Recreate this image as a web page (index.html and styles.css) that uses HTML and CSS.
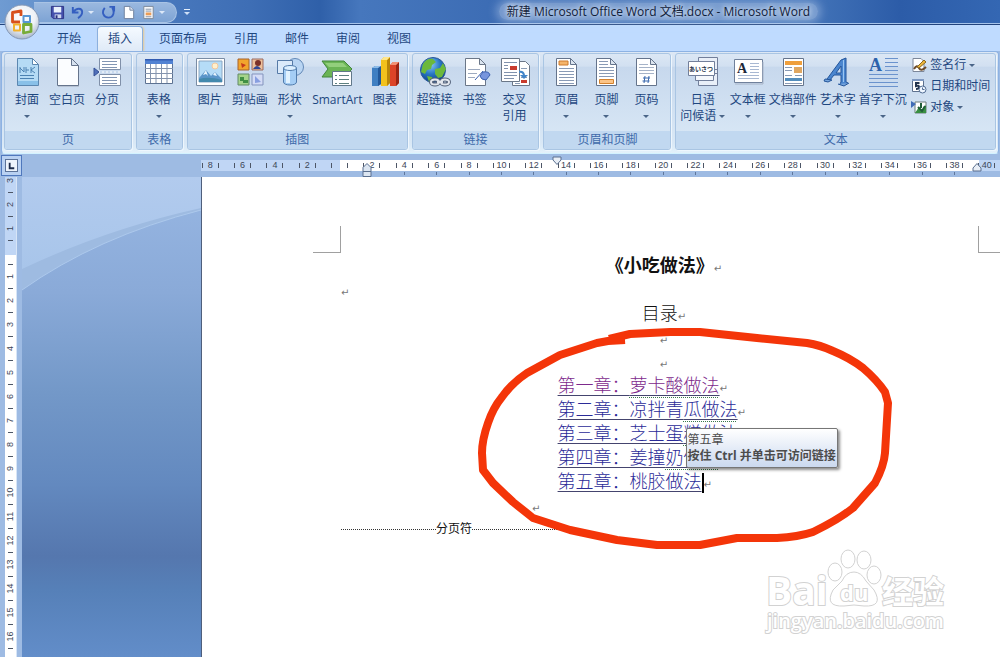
FILE: index.html
```html
<!DOCTYPE html>
<html lang="zh-CN">
  <head>
    <meta charset="UTF-8" />
    <meta name="viewport" content="width=device-width, initial-scale=1.0" />
    <title>新建 Microsoft Office Word 文档.docx - Microsoft Word</title>
    <link rel="stylesheet" href="styles.css">
  </head>

  <body>
    <!-- 标题栏 -->
    <header class="titlebar">
      <button class="office-button" aria-label="Office">
        <svg viewBox="0 0 38 38">
          <defs>
            <radialGradient id="orb" cx="50%" cy="35%" r="65%">
              <stop offset="0" stop-color="#fff" />
              <stop offset=".6" stop-color="#eef1f6" />
              <stop offset="1" stop-color="#a9b6ca" />
            </radialGradient>
          </defs>
          <circle cx="19" cy="19" r="17" fill="url(#orb)" stroke="#8497b5" />
          <g fill="none" stroke-width="2.8" stroke-linejoin="round">
            <path d="M17 19H9.500V9.500L18 8v5" stroke="#d8501c" />
            <path d="M20.500 13h6.500v6h-6.500z" stroke="#5796d4" stroke-width="2" />
            <path d="M11 21.500h6v6h-6z" stroke="#f2b12c" stroke-width="2" />
            <path d="M20.500 21.500h7.500v7l-7.500 1.500z" stroke="#77ac38" />
          </g>
        </svg>
      </button>
      <div class="quick-access">
        <button aria-label="保存">
          <svg viewBox="0 0 16 16"><path d="M1.500 1.500h13v13h-11l-2-2z" fill="#4450ac" stroke="#2c3283" /><path d="M4 2h8v6H4z" fill="#e9f0fb" /><path d="M5 10h7v4H5z" fill="#cdd5ec" /><path d="M6 11h2v3H6z" fill="#28317e" /></svg>
        </button>
        <button aria-label="撤销">
          <svg viewBox="0 0 16 16"><path d="M3 2v6h6M3.500 7.500C7 2.500 13 3 13 7.500c0 3-2 5-4.500 6.500" fill="none" stroke="#355fc0" stroke-width="2" /></svg>
        </button>
        <span class="caret light"></span>
        <button aria-label="恢复">
          <svg viewBox="0 0 16 16"><path d="M9 2h5v5M4 3C0 8 3 13.500 8 13.500S15 8 12 3" fill="none" stroke="#355fc0" stroke-width="2" /></svg>
        </button>
        <button aria-label="新建">
          <svg viewBox="0 0 16 16"><path d="M3.500 1.500h6l4 4v9h-10z" fill="#fff" stroke="#6e7f9c" /><path d="M9.500 1.500v4h4" fill="#dfe8f4" stroke="#6e7f9c" /></svg>
        </button>
        <button aria-label="页眉">
          <svg viewBox="0 0 16 16"><path d="M3 1.500h10v13H3z" fill="#f6f7f9" stroke="#7b8798" /><path d="M5 4.500h6M5 6.500h6M5 12.500h6" stroke="#8894a8" /><path d="M5 8h6v3H5z" fill="#ea9c56" /></svg>
        </button>
        <span class="caret light"></span>
      </div>
      <button class="qat-more" aria-label="自定义快速访问工具栏"><span class="caret light"></span></button>
      <h1 class="window-title"><span>新建 Microsoft Office Word 文档.docx - Microsoft Word</span></h1>
    </header>

    <!-- 选项卡 -->
    <nav class="tabs">
      <button>开始</button>
      <button class="active">插入</button>
      <button>页面布局</button>
      <button>引用</button>
      <button>邮件</button>
      <button>审阅</button>
      <button>视图</button>
    </nav>

    <!-- 功能区 -->
    <section class="ribbon">
      <div class="group three">
        <div class="tools">
          <button class="tool">
            <svg viewBox="0 0 32 32"><path d="M6.500 2.500h15l6 6v21h-21z" fill="#b5dbf5" stroke="#5c87b0" /><path d="M21.500 2.500v6h6z" fill="#fff" stroke="#5c87b0" /><path d="M9 11v6M9 12l4 4v-5M15 11v6M15 14h3M20 11v6M20 14l4-3M20 14l4 3M9 19.500h14M9 22.500h14" fill="none" stroke="#4c82b2" /><path d="M7 25h20v4H7z" fill="#89c0e8" /></svg>
            <span>封面</span><i class="caret"></i>
          </button>
          <button class="tool">
            <svg viewBox="0 0 32 32"><path d="M6.500 2.500h14l7 7v20h-21z" fill="#fbfdff" stroke="#65748c" /><path d="M20.500 2.500v7h7z" fill="#d7e2ef" stroke="#65748c" /><path d="M7 30.500h21" stroke="#b6c2d3" /></svg>
            <span>空白页</span>
          </button>
          <button class="tool">
            <svg viewBox="0 0 32 32"><path d="M8.500 2.500h21v11h-21zM8.500 18.500h21v11h-21z" fill="#fff" stroke="#8090a9" /><path d="M11 5.500h15M11 8.500h15M11 11.500h15M11 21.500h15M11 24.500h15M11 27.500h15" stroke="#8295b2" /><path d="M7 16h23" stroke="#fff" stroke-dasharray="2" /><path d="M3 12l5 4-5 4z" fill="#4f6fb9" stroke="#355097" /></svg>
            <span>分页</span>
          </button>
        </div>
        <h2>页</h2>
      </div>

      <div class="group one">
        <div class="tools">
          <button class="tool">
            <svg viewBox="0 0 32 32"><path d="M2.500 4.500h27v23h-27z" fill="#fff" stroke="#5d7292" /><path d="M2 3h28v5H2z" fill="#5282d2" /><path d="M2 3h28v1.500H2z" fill="#315bb1" /><path d="M2 12.500h28M2 17.500h28M2 22.500h28M7.500 8v19M13 8v19M18.500 8v19M24 8v19" stroke="#8393ad" /></svg>
            <span>表格</span><i class="caret"></i>
          </button>
        </div>
        <h2>表格</h2>
      </div>

      <div class="group pictures">
        <div class="tools">
          <button class="tool">
            <svg viewBox="0 0 32 32"><path d="M2.500 2.500h28v27h-28z" fill="#fff" stroke="#7a8ca4" /><path d="M5 5h23v21H5z" fill="#b5dcf7" stroke="#8aa6c3" /><circle cx="21" cy="10" r="3" fill="#fff0cd" stroke="#f3c79c" /><path d="M5 22l7-8 5 6 4-4 7 7v3H5z" fill="#5b96ca" /><path d="M12 14l-3 5 3-1 2 2zM21 16l-2 3 4 1z" fill="#e9f5fd" /><path d="M5 23q10-3 23 1v2H5z" fill="#4389ad" /></svg>
            <span>图片</span>
          </button>
          <button class="tool">
            <svg viewBox="0 0 32 32"><path d="M4 3h11v11H4z" fill="#f2a52c" stroke="#a7622c" /><path d="M7 7l5 2-4 3z" fill="#c3391c" /><path d="M18 3h11v11H18z" fill="#edc09a" stroke="#9a6b60" /><circle cx="24" cy="7" r="3" fill="#7b3128" /><path d="M19 13q4-6 8 0z" fill="#314794" /><path d="M4 18h11v11H4z" fill="#a5d48a" stroke="#628969" /><path d="M6 21h4v3h4v3h-5v-2H6z" fill="#409044" /><path d="M18 18h11v11H18z" fill="#d4dcf6" stroke="#8393bd" /><path d="M21 20l6 6-6 1z" fill="#879ee0" /></svg>
            <span>剪贴画</span>
          </button>
          <button class="tool">
            <svg viewBox="0 0 32 32"><circle cx="21" cy="11" r="8.500" fill="#b9d5f3" stroke="#6288b7" /><path d="M3.500 4.500h15v13h-15z" fill="#dbeafa" stroke="#567aa7" /><path d="M9.500 12v14c0 4 13 4 13 0V12" fill="#a4cdf5" stroke="#517cad" /><path d="M12 14v13h4V14z" fill="#e1f2ff" /><ellipse cx="16" cy="12" rx="6.500" ry="2.500" fill="#dcefff" stroke="#517cad" /></svg>
            <span>形状</span><i class="caret"></i>
          </button>
          <button class="tool wide">
            <svg viewBox="0 0 32 32"><path d="M1 5h22l8 8-8 8H1l6-8z" fill="#6ab455" stroke="#42873d" /><path d="M4 7h18l4 4H8z" fill="#92cf7c" /><path d="M11.500 15.500h19v14h-19z" fill="#fff" stroke="#61788a" /><path d="M18 19.500h10M18 23.500h10M18 27.500h10M14 19.500h2M14 23.500h2M14 27.500h2" stroke="#5d8080" /></svg>
            <span>SmartArt</span>
          </button>
          <button class="tool">
            <svg viewBox="0 0 32 32"><path d="M3 12l3-2h6v18l-3 2H3z" fill="#3f7fc2" /><path d="M9 12l3-2v18l-3 2z" fill="#22589a" /><path d="M3 12l3-2h6l-3 2z" fill="#8dbbe7" /><path d="M12 4l3-3h6v26l-3 3h-6z" fill="#f2c21d" /><path d="M18 4l3-3v26l-3 3z" fill="#b98709" /><path d="M12 4l3-3h6l-3 3z" fill="#ffe58b" /><path d="M21 9l3-3h6v21l-3 3h-6z" fill="#dc4428" /><path d="M27 9l3-3v21l-3 3z" fill="#992413" /><path d="M21 9l3-3h6l-3 3z" fill="#f19175" /></svg>
            <span>图表</span>
          </button>
        </div>
        <h2>插图</h2>
      </div>

      <div class="group three">
        <div class="tools">
          <button class="tool">
            <svg viewBox="0 0 32 32"><defs><radialGradient id="sea" cx="40%" cy="28%" r="75%"><stop offset="0" stop-color="#8dcaf6" /><stop offset=".5" stop-color="#2978c4" /><stop offset="1" stop-color="#0b3b88" /></radialGradient></defs><circle cx="14" cy="14" r="12.500" fill="url(#sea)" stroke="#2a5799" /><path d="M4 8q4-6 10-5l3 3-4 3-1 4-4 1-2 4-4-2zM16 13l5-1 3-5 3 6-4 8-4 1-3-4zM8 20l5 1 1 4-4 1z" fill="#6cb83b" /><g fill="none" stroke="#54627a" stroke-width="4"><ellipse cx="16" cy="26" rx="4" ry="2.500" /><ellipse cx="26" cy="26" rx="4" ry="2.500" /></g><g fill="none" stroke="#e2e6ed" stroke-width="2"><ellipse cx="16" cy="26" rx="4" ry="2.500" /><ellipse cx="26" cy="26" rx="4" ry="2.500" /><path d="M18 26h6" /></g></svg>
            <span>超链接</span>
          </button>
          <button class="tool">
            <svg viewBox="0 0 32 32"><path d="M6.500 2.500h14l6 6v21h-20z" fill="#fff" stroke="#6b7788" /><path d="M20.500 2.500v6h6z" fill="#dce5ef" stroke="#6b7788" /><path d="M9 13.500h12M9 17.500h9M9 21.500h7" stroke="#9daac0" /><path d="M16 24l8-9M24 16q6-1 7 3l-4 5q-5 0-6-4z" fill="#7795dd" stroke="#3b60b0" /></svg>
            <span>书签</span>
          </button>
          <button class="tool">
            <svg viewBox="0 0 32 32"><path d="M13.500 5.500h13l4 4v20h-17z" fill="#fff" stroke="#6b7788" /><path d="M22 24h6v3h-6z" fill="#c93b2d" /><path d="M16 27.500h5M22 12.500h6M22 21.500h6" stroke="#8b9cb5" /><path d="M2.500 2.500h18v23h-18z" fill="#fff" stroke="#6b7788" /><path d="M5 6.500h13M5 9.500h4M5 12.500h4M5 16.500h13M5 19.500h13M5 22.500h10" stroke="#8092ad" /><path d="M11 10h7v4h-7z" fill="#c93b2d" /><path d="M20 15q5-1 6 4h3l-4 4-4-4h3q-1-3-4-2z" fill="#4285c9" /></svg>
            <span>交叉<br>引用</span>
          </button>
        </div>
        <h2>链接</h2>
      </div>

      <div class="group three">
        <div class="tools">
          <button class="tool">
            <svg viewBox="0 0 32 32"><path d="M6.500 2.500h14l6 6v21h-20z" fill="#fff" stroke="#65748c" /><path d="M20.500 2.500v6h6z" fill="#dce5ef" stroke="#65748c" /><path d="M9 5h9v4H9z" fill="#f5b56b" stroke="#ce7a2c" /><path d="M9 12.500h15M9 15.500h15M9 18.500h15M9 21.500h15M9 24.500h15M9 27.500h15" stroke="#899ab5" /></svg>
            <span>页眉</span><i class="caret"></i>
          </button>
          <button class="tool">
            <svg viewBox="0 0 32 32"><path d="M6.500 2.500h14l6 6v21h-20z" fill="#fff" stroke="#65748c" /><path d="M20.500 2.500v6h6z" fill="#dce5ef" stroke="#65748c" /><path d="M9 5.500h9M9 8.500h9M9 11.500h15M9 14.500h15M9 17.500h15M9 20.500h15" stroke="#899ab5" /><path d="M9.500 23.500h14v4h-14z" fill="#fbc487" stroke="#d3822e" /></svg>
            <span>页脚</span><i class="caret"></i>
          </button>
          <button class="tool">
            <svg viewBox="0 0 32 32"><path d="M6.500 2.500h14l6 6v21h-20z" fill="#fff" stroke="#65748c" /><path d="M20.500 2.500v6h6z" fill="#dce5ef" stroke="#65748c" /><path d="M9 8.500h9M9 11.500h15M9 14.500h15M9 17.500h15" stroke="#a6b3c8" /><path d="M15 20l-1 7M19 20l-1 7M13 22h7M12.500 25h7" stroke="#3a69ae" /></svg>
            <span>页码</span><i class="caret"></i>
          </button>
        </div>
        <h2>页眉和页脚</h2>
      </div>

      <div class="group text-group">
        <div class="tools">
          <button class="tool mid">
            <svg viewBox="0 0 32 32"><path d="M11.500 1.500h19v16h-19zM11.500 13.500h19v16h-19z" fill="#e9eff8" stroke="#727f9b" /><path d="M8.500 10.500h18v14h-18z" fill="#f5f8fc" stroke="#727f9b" /><path d="M1.500 5.500h26v14h-26z" fill="#fff" stroke="#727f9b" /><text class="kana" x="2" y="15">あいさつ</text></svg>
            <span>日语<br>问候语 <i class="caret inline"></i></span>
          </button>
          <button class="tool mid">
            <svg viewBox="0 0 32 32"><path d="M2.500 3.500h28v23h-28z" fill="#fff" stroke="#6f809b" /><path d="M3 28h28V6" fill="none" stroke="#a8b4c7" /><text class="serif-a" x="5" y="17">A</text><path d="M18 7.500h9M18 10.500h9M18 13.500h9M18 16.500h9M6 19.500h21M6 22.500h21" stroke="#a8b8d2" /></svg>
            <span>文本框</span><i class="caret"></i>
          </button>
          <button class="tool mid">
            <svg viewBox="0 0 32 32"><path d="M6.500 2.500h20v27h-20z" fill="#fff" stroke="#65748c" /><path d="M8 5h17v4H8z" fill="#ef9f3c" /><path d="M8 11.500h7M8 14.500h7M18 19.500h7M8 19.500h7M8 27.500h17" stroke="#899ab5" /><path d="M17 11h8v6h-8z" fill="#e0a761" /><path d="M8 22h17v3H8z" fill="#538dbc" /></svg>
            <span>文档部件</span><i class="caret"></i>
          </button>
          <button class="tool mid">
            <svg viewBox="0 0 32 32"><path d="M5 23L19 4l5-2v24l2 1-5 2-3-1 1-2v-7h-7l-4 5-4 1zM14 17h5v-7z" fill="#4b86cf" stroke="#24559a" fill-rule="evenodd" /><path d="M3 23l7 1-4 2-4-1zM16 28l6 2 5-3" fill="#76a5dd" stroke="#24559a" /><path d="M21.500 4v22" stroke="#9bc6f2" /></svg>
            <span>艺术字</span><i class="caret"></i>
          </button>
          <button class="tool mid">
            <svg viewBox="0 0 32 32"><text class="serif-a drop" x="2" y="15">A</text><path d="M18 2.500h13M18 6.500h13M18 10.500h13M18 14.500h13M2 18.500h29M2 22.500h29M2 26.500h29M2 30.500h29" stroke="#6b93cd" /></svg>
            <span>首字下沉</span><i class="caret"></i>
          </button>
          <div class="small-tools">
            <button>
              <svg viewBox="0 0 16 16"><path d="M2 1.500h8l3 3v10H2z" fill="#fff" stroke="#7c879a" /><path d="M3 12q3-5 5-1t7-1" fill="none" stroke="#6b4b2c" stroke-width="2" /><path d="M6 10l7-7 2 2-7 6z" fill="#edb63d" stroke="#8b6821" /></svg>
              签名行 <i class="caret inline"></i>
            </button>
            <button>
              <svg viewBox="0 0 16 16"><path d="M1.500 1.500h11v12h-11z" fill="#fff" stroke="#5e718e" /><path d="M1 1h12v2H1z" fill="#7f99c2" /><path d="M8.500 5H5v3q3-1 3 1t-3 2" fill="none" stroke="#23344e" stroke-width="2" /><circle cx="11.500" cy="11.500" r="3.500" fill="#edf5ff" stroke="#526c92" /><path d="M11.500 9.500v2h2" fill="none" stroke="#526c92" /></svg>
              日期和时间
            </button>
            <button>
              <svg viewBox="0 0 16 16"><path d="M4 3h11v11H4z" fill="#fff" stroke="#6c7d7c" /><path d="M4 14l4-6 3 3 4-5v8z" fill="#398f42" /><path d="M0 2l5 3-5 4z" fill="#406bb6" /><path d="M10 4v5m-3-1l4 4 3-5" fill="none" stroke="#225e39" stroke-width="2" /></svg>
              对象 <i class="caret inline"></i>
            </button>
          </div>
        </div>
        <h2>文本</h2>
      </div>
    </section>

    <!-- 编辑区 -->
    <main class="workspace">
      <button class="tab-stop" aria-label="制表符"><svg viewBox="0 0 12 12"><path d="M4 3v6h5" fill="none" stroke="#1d2c4b" stroke-width="2" /></svg></button>
      <div class="ruler-top">
        <div class="ruler-track" id="rulerTop"></div>
        <svg class="marker indent-left" viewBox="0 0 10 16"><path d="M1 9.500V5.500l4-4 4 4v4zM1 9.500h8v5H1z" fill="#dce6f2" stroke="#5a6f8f" /></svg>
        <svg class="marker indent-first" viewBox="0 0 10 10"><path d="M1 1h8v3L5 8.500 1 4z" fill="#e8eef6" stroke="#5a6f8f" /></svg>
        <svg class="marker indent-right" viewBox="0 0 10 10"><path d="M1 9V6l4-4.500L9 6v3z" fill="#e8eef6" stroke="#5a6f8f" /></svg>
      </div>
      <div class="ruler-left"><div class="ruler-column" id="rulerLeft"></div></div>
      <div class="canvas">
        <svg viewBox="0 0 180 120" preserveAspectRatio="none">
          <defs>
            <linearGradient id="glow" x1="0" y1="0" x2="0" y2="1">
              <stop offset="0" stop-color="#b2cbee" />
              <stop offset="1" stop-color="#a8c5ea" />
            </linearGradient>
          </defs>
          <path d="M0 0h180v33Q75 60 0 113z" fill="#9ebbe1" />
          <path d="M0 0h180v31Q85 52 0 92z" fill="url(#glow)" />
          <path d="M0 113Q75 60 180 33" fill="none" stroke="#adc9ec" />
        </svg>
      </div>
      <article class="page">
        <div class="crop-marks"><span></span><span></span></div>
        <div class="content">
          <h3>《小吃做法》<i class="mark">↵</i></h3>
          <p><i class="mark">↵</i></p>
          <p class="center">目录<i class="mark">↵</i></p>
          <p class="center"><i class="mark">↵</i></p>
          <p class="center"><i class="mark">↵</i></p>
          <ul class="toc">
            <li><a class="visited" href="#c1">第一章：<span>萝卡酸做法</span></a><i class="mark">↵</i></li>
            <li><a href="#c2">第二章：凉拌青<span>瓜做法</span></a><i class="mark">↵</i></li>
            <li><a href="#c3">第三章：芝士蛋<span>糕做法</span></a><i class="mark">↵</i></li>
            <li><a href="#c4">第四章：姜撞<span>奶做法</span></a><i class="mark">↵</i></li>
            <li>
              <a href="#c5">第五章：桃胶做法</a><b class="cursor"></b><i class="mark">↵</i>
              <div class="tooltip" role="tooltip">第五章<strong>按住 Ctrl 并单击可访问链接</strong></div>
            </li>
          </ul>
          <p class="after-toc"><i class="mark">↵</i></p>
          <div class="page-break">分页符</div>
        </div>
        <!-- 手绘红圈 -->
        <svg class="red-circle" viewBox="202 177 798 480">
          <path d="M625 340L608 341 597 343 560 355 527 373 Q512 383 502 397 Q493 408 488 423 Q482 440 482 453 L483 470 493 483 513 502 533 518 570 530 617 540 657 545H700L737 538H777Q798 537 813 532Q838 520 853 508L875 483Q884 466 885 453L888 403 885 392Q877 380 863 368Q850 358 833 351Q820 345 807 343L757 338 700 332H670L630 334 609 339" />
        </svg>
        <!-- 水印 -->
        <svg class="watermark" viewBox="0 0 190 90">
          <text class="brand" x="4" y="56">Bai</text>
          <g class="paw">
            <ellipse cx="73" cy="23" rx="7" ry="9" />
            <ellipse cx="86" cy="10" rx="7" ry="9" />
            <ellipse cx="102" cy="11" rx="7" ry="9" />
            <ellipse cx="112" cy="26" rx="7" ry="9" />
            <path d="M92 23q7 0 12 9l8 9q10 17-10 16-10-2-20 0-20 1-11-16l9-9q4-9 12-9z" />
          </g>
          <text class="du" x="78" y="52">du</text>
          <text class="exp" x="120" y="54">经验</text>
          <text class="site" x="5" y="79">jingyan.baidu.com</text>
        </svg>
      </article>
    </main>

    <script>
      // 水平标尺：左侧 8~2 为页边距
      const rulerTop = document.getElementById("rulerTop");
      for (let n = -8; n <= 40; n += 2) {
        const cell = document.createElement("div");
        cell.className = "cell";
        if (n < 0) cell.classList.add("margin");
        if (n === 0) cell.classList.add("zero");
        if (n === 40) cell.classList.add("end");
        if (n > 2 && n < 40) cell.classList.add("stop");
        cell.innerHTML = `<span>${n === 0 ? "" : Math.abs(n)}</span>`;
        rulerTop.appendChild(cell);
      }

      // 垂直标尺
      const rulerLeft = document.getElementById("rulerLeft");
      for (let n = -3; n <= 16; n++) {
        const cell = document.createElement("div");
        cell.className = n < 0 ? "cell margin" : n === 0 ? "cell zero" : "cell";
        cell.innerHTML = `<span>${n === 0 ? "" : Math.abs(n)}</span>`;
        rulerLeft.appendChild(cell);
      }
    </script>
  </body>
</html>
```
FILE: styles.css
```css
/* 全局样式 */
* {
  box-sizing: border-box;
}

body {
  margin: 0;
  height: 100vh;
  display: flex;
  flex-direction: column;
  overflow: hidden;
  background: #9ebbe3;
  color: #1e477f;
  font: 12px/16px "Open Sans", "Noto Sans CJK SC", sans-serif;
}

button {
  margin: 0;
  padding: 0;
  border: 0;
  background: none;
  color: inherit;
  font: inherit;
}

h1,
h2,
h3,
p,
ul {
  margin: 0;
  padding: 0;
}

svg {
  display: block;
}

.caret {
  display: block;
  width: 0;
  border: 3px solid transparent;
  border-top-color: #4a6588;
  border-bottom: 0;
}

.caret.inline {
  display: inline-block;
  vertical-align: middle;
}

.caret.light {
  border-top-color: #cfe0f7;
}

/* 标题栏 */
.titlebar {
  position: relative;
  flex: none;
  height: 25px;
  display: flex;
  align-items: center;
  padding-left: 34px;
  background: linear-gradient(90deg, #6f9bd2 0, #4b7bbf 14%, #3e6eb5 25%, #2f60a9 32%, #4677bd 36%, #3c6cb4 50%, #4576ba 80%, #2c5ca8 90%, #3467b3 100%);
  border-bottom: 1px solid #21437d;
  box-shadow: inset 0 -1px #a5c3ea;
}

.office-button {
  position: absolute;
  left: 3px;
  top: 3px;
  width: 38px;
  height: 38px;
  z-index: 2;
}

.quick-access {
  height: 21px;
  display: flex;
  align-items: center;
  gap: 5px;
  padding: 0 9px 0 16px;
  border: 1px solid #a8c3e5;
  border-left: 0;
  border-radius: 0 12px 12px 0;
  background: linear-gradient(#9ab8df, #7da3d4);
}

.quick-access svg {
  width: 15px;
  height: 15px;
}

.quick-access .caret {
  margin: 0 2px 0 -2px;
  border-top-color: #dce8f8;
}

.qat-more {
  padding: 1px 7px;
}

.qat-more::before {
  content: "";
  display: block;
  width: 6px;
  height: 1px;
  margin-bottom: 2px;
  background: #e5effb;
}

.window-title {
  flex: 1;
  padding-left: 120px;
  text-align: center;
  font-size: 12px;
  font-weight: 400;
  color: #10203a;
  white-space: nowrap;
}

.window-title span {
  padding: 0 8px;
  border-radius: 10px;
  background: rgba(200, 218, 242, 0.4);
  box-shadow: 0 0 8px 3px rgba(200, 218, 242, 0.4);
  text-shadow: 0 0 5px #fff, 0 0 8px #dbe8fa;
}

/* 选项卡 */
.tabs {
  flex: none;
  height: 26px;
  display: flex;
  gap: 5px;
  padding: 1px 0 0 46px;
  background: #bfdbff;
}

.tabs button {
  padding: 0 10px;
  border: 1px solid transparent;
  border-bottom: 0;
}

.tabs .active {
  background: linear-gradient(#f5faff, #dfeaf7);
  border-color: #8bb0df;
  border-radius: 4px 4px 0 0;
  box-shadow: 1px 0 2px #e9c88c;
}

/* 功能区 */
.ribbon {
  flex: none;
  display: flex;
  gap: 4px;
  margin: 0 1px;
  padding: 1px 2px 3px;
  border: 1px solid #8db2e3;
  border-bottom-color: #d2f2ff;
  border-radius: 4px;
  background: linear-gradient(#dde8f5 0, #d2e0f1 14%, #c7d8ed 15%, #d9e8f6 90%, #e3f1fb 100%);
}

.group {
  display: flex;
  flex-direction: column;
  min-width: 0;
  border: 1px solid #a9c5e3;
  border-radius: 3px;
  box-shadow: 1px 1px #eef6fd;
  overflow: hidden;
}

.group.one {
  flex: 45 1 0;
}

.group.three {
  flex: 126 1 0;
}

.group.pictures {
  flex: 219 1 0;
}

.group.text-group {
  flex: 319 1 0;
}

.group h2 {
  height: 18px;
  text-align: center;
  font-size: 12px;
  line-height: 17px;
  font-weight: 400;
  color: #3e6aaa;
  background: #c1d8f0;
}

.tools {
  height: 77px;
  display: flex;
  padding: 2px 2px 0;
}

.tool {
  flex: none;
  width: 40px;
  display: flex;
  flex-direction: column;
  align-items: center;
  white-space: nowrap;
}

.tool svg {
  width: 32px;
  height: 32px;
  margin-bottom: 4px;
}

.tool > .caret {
  margin-top: 7px;
}

.tool.wide {
  width: 55px;
}

.tool.mid {
  width: 45px;
}

.text-group .tools {
  padding-left: 4px;
}

.small-tools {
  display: flex;
  flex-direction: column;
  gap: 5px;
  padding: 1px 0 0 6px;
}

.small-tools button {
  display: flex;
  align-items: center;
  gap: 3px;
  white-space: nowrap;
}

.small-tools svg {
  width: 16px;
  height: 16px;
}

.kana {
  font: 700 6px "Noto Sans CJK JP", sans-serif;
  fill: #26334a;
}

.serif-a {
  font: 700 14px "Liberation Serif", serif;
  fill: #1d2737;
}

.serif-a.drop {
  font-size: 18px;
  fill: #2c62ab;
}

.tool svg {
  overflow: visible;
}

/* 编辑区 */
.workspace {
  flex: 1;
  min-height: 0;
  display: grid;
  grid-template: 23px 1fr / 22px 179px 1fr;
}

.tab-stop {
  margin: 1px 0 1px 1px;
  padding: 3px;
  border: 1px solid #4f78bd;
  background: #b9d1f2;
}

.tab-stop svg {
  width: 13px;
  height: 13px;
  border: 1px solid #5c7399;
  background: #eef4fc;
}

.ruler-top {
  position: relative;
  grid-column: 3;
  padding-top: 6px;
  overflow: hidden;
}

.ruler-track {
  display: grid;
  grid-auto-flow: column;
  grid-auto-columns: 1fr;
  margin: 0 -3px 0 -7px;
}

.ruler-track .cell {
  height: 15px;
  display: flex;
  align-items: center;
  justify-content: center;
  padding-bottom: 4px;
  background: linear-gradient(#fff, #fff) content-box;
  color: #3c4657;
  font: 9px/11px "Liberation Sans", sans-serif;
}

.ruler-track .cell::before,
.ruler-track .cell::after {
  content: "";
  width: 1px;
  height: 5px;
  background: #4d5666;
}

.ruler-track .cell span {
  width: 15px;
  text-align: center;
}

.ruler-track .margin {
  background: linear-gradient(#c0d6f5, #c0d6f5) content-box;
}

.ruler-track .zero {
  background: linear-gradient(90deg, #c0d6f5 50%, #fff 50%) content-box;
}

.ruler-track .end {
  background: linear-gradient(90deg, #fff 25%, #c0d6f5 25%) content-box;
}

.ruler-track .stop {
  background: linear-gradient(#60779c, #60779c) 50% 100% / 1px 3px no-repeat, linear-gradient(#fff, #fff) content-box;
}

.marker {
  position: absolute;
  width: 10px;
}

.indent-left {
  left: 161px;
  top: 8px;
}

.indent-first {
  left: 351px;
  top: 2px;
}

.indent-right {
  right: 18px;
  top: 8px;
}

.ruler-left {
  grid-column: 1;
  padding-left: 5px;
  overflow: hidden;
}

.ruler-column {
  width: 12px;
  height: calc(100% + 8px);
  margin-top: -8px;
  border-right: 1px solid #d7e5f7;
  background: #fff;
}

.ruler-column .cell {
  height: 24px;
  display: flex;
  flex-direction: column;
  align-items: center;
  justify-content: space-between;
  color: #3c4657;
  font: 9px/23px "Liberation Sans", sans-serif;
}

.ruler-column .cell::after {
  content: "";
  flex: none;
  width: 5px;
  height: 1px;
  background: #4d5666;
}

.ruler-column .cell span {
  height: 23px;
  transform: rotate(-90deg);
}

.ruler-column .margin {
  background: #c0d6f5;
}

.ruler-column .zero {
  background: linear-gradient(#c0d6f5 58%, #fff 58%);
}

.canvas {
  background: linear-gradient(#98b7e3 0, #8aaad8 24%, #7398c8 45%, #6389bf 64%, #5577ae 79%, #5680b8 86%, #628dc9 100%);
}

.canvas svg {
  width: 100%;
  height: 120px;
}

/* 文档页面 */
.page {
  position: relative;
  overflow: hidden;
  border-left: 1px solid #4f5f7c;
  background: #fff;
  color: #111;
}

.crop-marks {
  height: 76px;
  display: flex;
  align-items: flex-end;
  justify-content: space-between;
  padding-left: 111px;
}

.crop-marks span {
  width: 28px;
  height: 27px;
  border: solid #a0a0a0;
  border-width: 0 1px 1px 0;
}

.crop-marks span:last-child {
  width: 22px;
  border-width: 0 0 1px 1px;
}

.content {
  padding: 0 22px 0 139px;
  font-size: 18px;
  line-height: 24px;
  font-weight: 300;
}

.content h3 {
  font-size: 18px;
  font-weight: 700;
  text-align: center;
}

.content p {
  height: 24px;
}

.center {
  text-align: center;
}

.mark {
  font: 10px/12px "DejaVu Sans", sans-serif;
  color: #777;
}

/* 段落标记不参与居中 */
.content h3 .mark,
.center .mark {
  margin-right: -9px;
}

.toc {
  list-style: none;
  margin-left: 34%;
}

.toc li {
  position: relative;
  height: 24px;
  white-space: nowrap;
}

.toc a {
  color: #2b2b98;
  text-decoration: underline;
  text-decoration-color: #44446e;
  text-decoration-thickness: 1px;
  text-underline-offset: 3px;
}

.toc a.visited {
  color: #7d2a8c;
}

.toc a span {
  text-decoration: underline dotted #3b7a4b 1px;
  text-underline-offset: 5px;
}

.cursor {
  display: inline-block;
  width: 2px;
  height: 20px;
  background: #000;
  vertical-align: middle;
}

.tooltip {
  position: absolute;
  left: 128px;
  top: -41px;
  padding: 3px 1px;
  border: 1px solid #767676;
  border-radius: 2px;
  background: linear-gradient(#fff, #cbd9ef);
  box-shadow: 2px 2px 3px rgba(0, 0, 0, 0.45);
  color: #4c4c4c;
  font-size: 12px;
  line-height: 16px;
  font-weight: 400;
}

.tooltip strong {
  display: block;
  font-weight: 700;
}

.after-toc {
  padding-left: 30%;
}

.page-break {
  width: 226px;
  display: flex;
  align-items: center;
  font-size: 12px;
  font-weight: 400;
}

.page-break::before,
.page-break::after {
  content: "";
  flex: 1;
  border-top: 1px dotted #333;
}

.red-circle {
  position: absolute;
  left: 0;
  top: 0;
  width: 798px;
  height: 480px;
  fill: none;
  stroke: #f43509;
  stroke-width: 8;
  stroke-linejoin: round;
  pointer-events: none;
}

/* 水印 */
.watermark {
  position: absolute;
  right: 48px;
  bottom: 18px;
  width: 190px;
  height: 90px;
  fill: #fff;
  stroke: #d2d2d2;
  stroke-width: 2;
}

.watermark text {
  paint-order: stroke;
}

.paw {
  stroke-width: 1;
}

.brand {
  font: 700 39px "Open Sans", sans-serif;
}

.du {
  font: 700 22px "Open Sans", sans-serif;
}

.exp {
  font: 700 31px "Noto Sans CJK SC", sans-serif;
}

.site {
  font: 600 20px "Open Sans", sans-serif;
}
```
